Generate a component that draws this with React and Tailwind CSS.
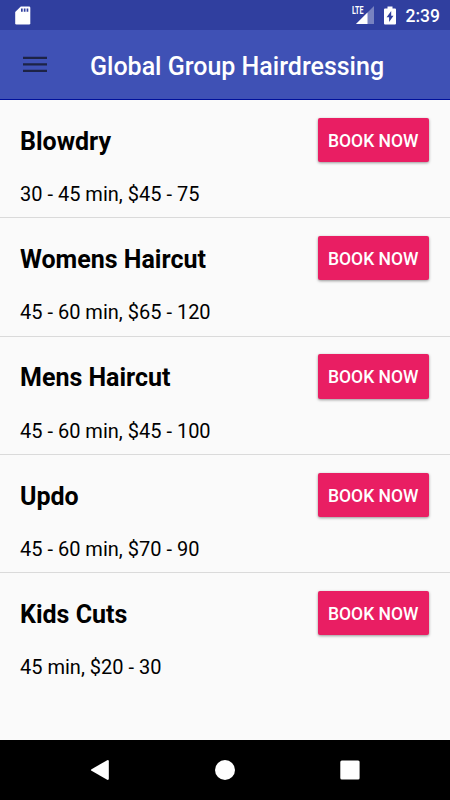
const services = [
    { id: 1, name: 'Blowdry', details: '30 - 45 min, $45 - 75' },
    { id: 2, name: 'Womens Haircut', details: '45 - 60 min, $65 - 120' },
    { id: 3, name: 'Mens Haircut', details: '45 - 60 min, $45 - 100' },
    { id: 4, name: 'Updo', details: '45 - 60 min, $70 - 90' },
    { id: 5, name: 'Kids Cuts', details: '45 min, $20 - 30' },
];

function StatusBar() {
    return (
        <div className="flex h-[30px] shrink-0 items-center bg-[#303f9f] pr-[10px] pl-[15px] text-white">
            <svg className="h-[19px] w-[16px]" viewBox="0 0 16 19" fill="currentColor">
                <path d="M5.8.5H14a1.3 1.3 0 0 1 1.3 1.3v15.4a1.3 1.3 0 0 1-1.3 1.3H1.5a1.3 1.3 0 0 1-1.3-1.3V6z" />
                <path d="M6 2.5h1.7v3.3H6zM8.8 2.5h1.7v3.3H8.8zM11.6 2.5h1.7v3.3h-1.7z" fill="#303f9f" />
            </svg>
            <div className="ml-auto flex items-center">
                <div className="relative mr-[10px] h-[20px] w-[23px]">
                    <svg className="h-full w-full" viewBox="0 0 23 20" fill="currentColor">
                        <path d="M23 1v18H5z" opacity=".35" />
                        <path d="M16.5 7.5V19H5z" />
                    </svg>
                    <span className="absolute top-0 left-[1px] origin-left scale-x-[0.62] text-[11.5px] leading-[10px] font-bold">LTE</span>
                </div>
                <svg className="mr-[10px] h-[19px] w-[12px]" viewBox="0 0 12 19" fill="currentColor">
                    <path d="M3.5.5h5v2H11a1 1 0 0 1 1 1v14a1 1 0 0 1-1 1H1a1 1 0 0 1-1-1v-14a1 1 0 0 1 1-1h2.5z" />
                    <path d="M7.2 5v4.7h2.3L5.1 16v-4.8H2.6z" fill="#303f9f" />
                </svg>
                <span className="pt-[3px] text-[17.5px] leading-none font-medium">2:39</span>
            </div>
        </div>
    );
}

function Header({ title }) {
    return (
        <header className="flex h-[70px] shrink-0 items-center border-b border-[#00109b] bg-[#3f51b5] pl-[23px]">
            <button type="button" aria-label="Menu" className="h-[17px] w-[24px]">
                <svg className="h-[17px] w-[24px]" viewBox="0 0 24 17" fill="#1d2345">
                    <path d="M0 .8h24v2.3H0zM0 7.3h24v2.3H0zM0 13.8h24v2.3H0z" />
                </svg>
            </button>
            <h1 className="mt-[5px] ml-[43px] text-[25px] leading-[30px] font-medium whitespace-nowrap text-white">{title}</h1>
        </header>
    );
}

function ServiceRow({ service }) {
    return (
        <li className="flex h-[118.3px] items-start justify-between border-b border-[#dadada] pr-[21px] pl-5 last:border-b-0">
            <div className="pt-[26.8px] text-black">
                <h2 className="text-[25px] leading-[30px] font-bold">{service.name}</h2>
                <p className="mt-[25.4px] text-[20px] leading-[24px]">{service.details}</p>
            </div>
            <button type="button" className="mt-[17.8px] h-[44.4px] w-[110.6px] rounded-[2px] bg-[#e91e63] pt-[2px] pr-[1px] text-[17.5px] font-medium whitespace-nowrap text-white shadow-[0_1px_3px_rgba(0,0,0,0.4)]">
                BOOK NOW
            </button>
        </li>
    );
}

function NavigationBar() {
    return (
        <nav className="flex h-[60px] shrink-0 items-center justify-center gap-[105px] bg-black text-white">
            <svg className="h-[20px] w-[20px]" viewBox="0 0 20 20" fill="currentColor">
                <path d="M1.5 9.2 17.2.2q1.6-.6 1.6 1v17.6q0 1.6-1.6 1L1.5 10.8q-1.2-.8 0-1.6z" />
            </svg>
            <span className="size-[20px] rounded-full bg-white" />
            <svg className="size-[20px]" viewBox="0 0 20 20" fill="currentColor">
                <rect x=".3" y=".4" width="19.3" height="19.2" rx="1.5" />
            </svg>
        </nav>
    );
}

export default function App() {
    return (
        <div className="flex h-[800px] w-[450px] flex-col overflow-hidden bg-[#fafafa] font-[Roboto,sans-serif]">
            <StatusBar />
            <Header title="Global Group Hairdressing" />
            <ul className="min-h-0 flex-1">
                {services.map((s) => (
                    <ServiceRow key={s.id} service={s} />
                ))}
            </ul>
            <NavigationBar />
        </div>
    );
}
